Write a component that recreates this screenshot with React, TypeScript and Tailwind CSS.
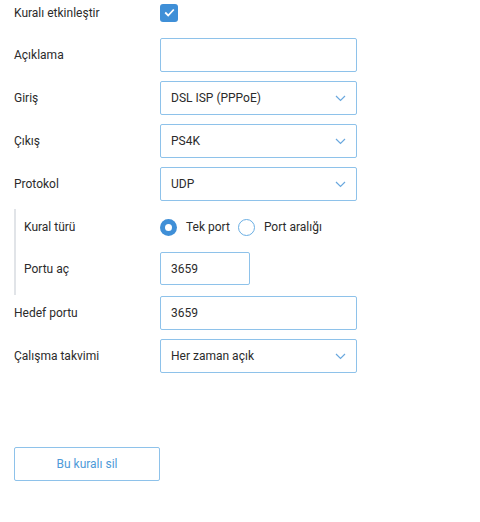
import React from "react";

function Chevron() {
  return (
    <svg width="11" height="7" viewBox="0 0 11 7" className="shrink-0">
      <path d="M1 1l4.5 4.5L10 1" fill="none" stroke="#6aa8de" strokeWidth="1.2" />
    </svg>
  );
}

function Row({ label, indent = false, children }: { label: string; indent?: boolean; children: React.ReactNode }) {
  return (
    <div className="flex items-center">
      <div className={`shrink-0 ${indent ? "w-[136px]" : "w-[146px]"}`}>{label}</div>
      {children}
    </div>
  );
}

function TextBox({ value = "", width = "w-[197px]", height = "h-[34px]" }: { value?: string; width?: string; height?: string }) {
  return (
    <div className={`${width} ${height} border border-[#8ec2ea] rounded-[2px] flex items-center px-[10px]`}>
      {value}
    </div>
  );
}

function Select({ value }: { value: string }) {
  return (
    <div className="w-[197px] h-[34px] border border-[#8ec2ea] rounded-[2px] flex items-center justify-between pl-[10px] pr-[10px]">
      <span>{value}</span>
      <Chevron />
    </div>
  );
}

function Radio({ checked, label }: { checked: boolean; label: string }) {
  return (
    <div className="flex items-center gap-[9px]">
      {checked ? (
        <span className="w-[17px] h-[17px] rounded-full bg-[#3f8fd7] flex items-center justify-center">
          <span className="w-[7px] h-[7px] rounded-full bg-white" />
        </span>
      ) : (
        <span className="w-[17px] h-[17px] rounded-full border border-[#6aaee3] bg-white" />
      )}
      <span>{label}</span>
    </div>
  );
}

export default function App() {
  const [enabled, setEnabled] = React.useState(true);

  return (
    <div className="w-[480px] h-[522px] bg-white px-[14px] text-[12px] text-[#2b2b2b] font-['Roboto',sans-serif]">
      <div className="flex items-center h-[25px]">
        <div className="w-[146px] shrink-0">Kuralı etkinleştir</div>
        <button
          type="button"
          onClick={() => setEnabled(!enabled)}
          className="w-[18px] h-[18px] rounded-[3px] bg-[#3f8fd7] flex items-center justify-center"
        >
          {enabled && (
            <svg width="11" height="9" viewBox="0 0 11 9">
              <path d="M1.2 4.5l3 3L9.8 1.5" fill="none" stroke="white" strokeWidth="1.8" />
            </svg>
          )}
        </button>
      </div>

      <div className="mt-[13px] flex flex-col gap-[9px]">
        <Row label="Açıklama">
          <TextBox />
        </Row>
        <Row label="Giriş">
          <Select value="DSL ISP (PPPoE)" />
        </Row>
        <Row label="Çıkış">
          <Select value="PS4K" />
        </Row>
        <Row label="Protokol">
          <Select value="UDP" />
        </Row>
      </div>

      <div className="mt-[8px] border-l-2 border-[#e1e4e8] pl-[8px] pt-[1px] pb-[10px] flex flex-col gap-[8px]">
        <div className="h-[34px] flex items-center">
          <div className="w-[136px] shrink-0">Kural türü</div>
          <div className="flex items-center gap-[8px]">
            <Radio checked label="Tek port" />
            <Radio checked={false} label="Port aralığı" />
          </div>
        </div>
        <Row label="Portu aç" indent>
          <TextBox value="3659" width="w-[90px]" height="h-[33px]" />
        </Row>
      </div>

      <div className="mt-[1px] flex flex-col gap-[9px]">
        <Row label="Hedef portu">
          <TextBox value="3659" />
        </Row>
        <Row label="Çalışma takvimi">
          <Select value="Her zaman açık" />
        </Row>
      </div>

      <button
        type="button"
        className="mt-[74px] w-[146px] h-[34px] border border-[#8ec2ea] rounded-[2px] text-[#4e9ad8] text-[12px]"
      >
        Bu kuralı sil
      </button>
    </div>
  );
}
